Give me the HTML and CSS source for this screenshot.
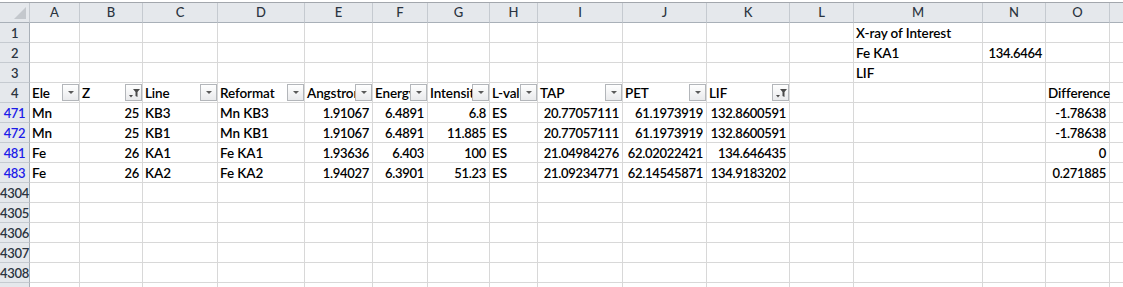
FILE: index.html
```html
<!DOCTYPE html>
<html lang="en">
<head>
    <meta charset="UTF-8">
    <title>Sheet1</title>
    <link rel="stylesheet" href="styles.css">
</head>
<body>
    <div class="sheet">
        <!-- column headers -->
        <div class="corner"></div>
        <div class="ch">A</div><div class="ch">B</div><div class="ch">C</div><div class="ch">D</div>
        <div class="ch">E</div><div class="ch">F</div><div class="ch">G</div><div class="ch">H</div>
        <div class="ch">I</div><div class="ch">J</div><div class="ch">K</div><div class="ch">L</div>
        <div class="ch">M</div><div class="ch">N</div><div class="ch">O</div><div class="ch"></div>

        <!-- row 1 -->
        <div class="rh">1</div>
        <div class="c"></div><div class="c"></div><div class="c"></div><div class="c"></div>
        <div class="c"></div><div class="c"></div><div class="c"></div><div class="c"></div>
        <div class="c"></div><div class="c"></div><div class="c"></div><div class="c"></div>
        <div class="c">X-ray of Interest</div><div class="c"></div><div class="c"></div><div class="c"></div>

        <!-- row 2 -->
        <div class="rh">2</div>
        <div class="c"></div><div class="c"></div><div class="c"></div><div class="c"></div>
        <div class="c"></div><div class="c"></div><div class="c"></div><div class="c"></div>
        <div class="c"></div><div class="c"></div><div class="c"></div><div class="c"></div>
        <div class="c">Fe KA1</div><div class="c num">134.6464</div><div class="c"></div><div class="c"></div>

        <!-- row 3 -->
        <div class="rh">3</div>
        <div class="c"></div><div class="c"></div><div class="c"></div><div class="c"></div>
        <div class="c"></div><div class="c"></div><div class="c"></div><div class="c"></div>
        <div class="c"></div><div class="c"></div><div class="c"></div><div class="c"></div>
        <div class="c">LIF</div><div class="c"></div><div class="c"></div><div class="c"></div>

        <!-- row 4: table header with filters -->
        <div class="rh">4</div>
        <div class="c hd">Ele<span class="fb"></span></div>
        <div class="c hd">Z<span class="fb on"><svg viewBox="0 0 15 16" width="15" height="16"><path d="M7 4h7l-2.5 3v5l-2 -1v-4z" fill="#4a4a4a"/><path d="M3 10h4l-2 2.5z" fill="#4a4a4a"/></svg></span></div>
        <div class="c hd">Line<span class="fb"></span></div>
        <div class="c hd">Reformat<span class="fb"></span></div>
        <div class="c hd">Angstrom<span class="fb"></span></div>
        <div class="c hd">Energy<span class="fb"></span></div>
        <div class="c hd">Intensity<span class="fb"></span></div>
        <div class="c hd">L-value<span class="fb"></span></div>
        <div class="c hd">TAP<span class="fb"></span></div>
        <div class="c hd">PET<span class="fb"></span></div>
        <div class="c hd">LIF<span class="fb on"><svg viewBox="0 0 15 16" width="15" height="16"><path d="M7 4h7l-2.5 3v5l-2 -1v-4z" fill="#4a4a4a"/><path d="M3 10h4l-2 2.5z" fill="#4a4a4a"/></svg></span></div>
        <div class="c"></div><div class="c"></div><div class="c"></div>
        <div class="c spill">Difference</div><div class="c"></div>

        <!-- row 471 -->
        <div class="rh flt">471</div>
        <div class="c">Mn</div><div class="c num">25</div><div class="c">KB3</div><div class="c">Mn KB3</div>
        <div class="c num">1.91067</div><div class="c num">6.4891</div><div class="c num">6.8</div><div class="c">ES</div>
        <div class="c num">20.77057111</div><div class="c num">61.1973919</div><div class="c num">132.8600591</div><div class="c"></div>
        <div class="c"></div><div class="c"></div><div class="c num">-1.78638</div><div class="c"></div>

        <!-- row 472 -->
        <div class="rh flt">472</div>
        <div class="c">Mn</div><div class="c num">25</div><div class="c">KB1</div><div class="c">Mn KB1</div>
        <div class="c num">1.91067</div><div class="c num">6.4891</div><div class="c num">11.885</div><div class="c">ES</div>
        <div class="c num">20.77057111</div><div class="c num">61.1973919</div><div class="c num">132.8600591</div><div class="c"></div>
        <div class="c"></div><div class="c"></div><div class="c num">-1.78638</div><div class="c"></div>

        <!-- row 481 -->
        <div class="rh flt">481</div>
        <div class="c">Fe</div><div class="c num">26</div><div class="c">KA1</div><div class="c">Fe KA1</div>
        <div class="c num">1.93636</div><div class="c num">6.403</div><div class="c num">100</div><div class="c">ES</div>
        <div class="c num">21.04984276</div><div class="c num">62.02022421</div><div class="c num">134.646435</div><div class="c"></div>
        <div class="c"></div><div class="c"></div><div class="c num">0</div><div class="c"></div>

        <!-- row 483 -->
        <div class="rh flt">483</div>
        <div class="c">Fe</div><div class="c num">26</div><div class="c">KA2</div><div class="c">Fe KA2</div>
        <div class="c num">1.94027</div><div class="c num">6.3901</div><div class="c num">51.23</div><div class="c">ES</div>
        <div class="c num">21.09234771</div><div class="c num">62.14545871</div><div class="c num">134.9183202</div><div class="c"></div>
        <div class="c"></div><div class="c"></div><div class="c num">0.271885</div><div class="c"></div>

        <!-- empty rows -->
        <div class="rh">4304</div>
        <div class="c"></div><div class="c"></div><div class="c"></div><div class="c"></div>
        <div class="c"></div><div class="c"></div><div class="c"></div><div class="c"></div>
        <div class="c"></div><div class="c"></div><div class="c"></div><div class="c"></div>
        <div class="c"></div><div class="c"></div><div class="c"></div><div class="c"></div>

        <div class="rh">4305</div>
        <div class="c"></div><div class="c"></div><div class="c"></div><div class="c"></div>
        <div class="c"></div><div class="c"></div><div class="c"></div><div class="c"></div>
        <div class="c"></div><div class="c"></div><div class="c"></div><div class="c"></div>
        <div class="c"></div><div class="c"></div><div class="c"></div><div class="c"></div>

        <div class="rh">4306</div>
        <div class="c"></div><div class="c"></div><div class="c"></div><div class="c"></div>
        <div class="c"></div><div class="c"></div><div class="c"></div><div class="c"></div>
        <div class="c"></div><div class="c"></div><div class="c"></div><div class="c"></div>
        <div class="c"></div><div class="c"></div><div class="c"></div><div class="c"></div>

        <div class="rh">4307</div>
        <div class="c"></div><div class="c"></div><div class="c"></div><div class="c"></div>
        <div class="c"></div><div class="c"></div><div class="c"></div><div class="c"></div>
        <div class="c"></div><div class="c"></div><div class="c"></div><div class="c"></div>
        <div class="c"></div><div class="c"></div><div class="c"></div><div class="c"></div>

        <div class="rh">4308</div>
        <div class="c"></div><div class="c"></div><div class="c"></div><div class="c"></div>
        <div class="c"></div><div class="c"></div><div class="c"></div><div class="c"></div>
        <div class="c"></div><div class="c"></div><div class="c"></div><div class="c"></div>
        <div class="c"></div><div class="c"></div><div class="c"></div><div class="c"></div>

        <div class="rh"></div>
        <div class="c"></div><div class="c"></div><div class="c"></div><div class="c"></div>
        <div class="c"></div><div class="c"></div><div class="c"></div><div class="c"></div>
        <div class="c"></div><div class="c"></div><div class="c"></div><div class="c"></div>
        <div class="c"></div><div class="c"></div><div class="c"></div><div class="c"></div>
    </div>
</body>
</html>
```

FILE: styles.css
```css
body {
    margin: 0;
    background: #fff;
    font-family: Lato, 'Liberation Sans', sans-serif;
    font-size: 13.5px;
    font-weight: 600;
    letter-spacing: -0.1px;
    color: #000;
    overflow: hidden;
}
.sheet {
    margin-top: 2px;
    border-top: 1px solid #a3a7ad;
    display: grid;
    grid-template-columns: 30px 50px 63px 75px 87px 68px 55px 62px 48px 85px 84px 83px 64px 129px 63px 64px 60px;
    grid-auto-rows: 20px;
}
.sheet > div {
    box-sizing: border-box;
    border-right: 1px solid #d8d8d8;
    border-bottom: 1px solid #d8d8d8;
    white-space: nowrap;
}
.corner {
    position: relative;
    background: #e5e8ec;
}
.sheet > .corner,
.sheet > .ch {
    border-right-color: #c5cad0;
    border-bottom-color: #a9b0b8;
}
.corner::after {
    content: '';
    position: absolute;
    right: 3px;
    bottom: 3px;
    border-style: solid;
    border-width: 0 0 12px 12px;
    border-color: transparent transparent #c4c8cd transparent;
}
.ch {
    background: #e5e8ec;
    color: #2b3440;
    text-align: center;
    line-height: 19px;
    font-weight: 500;
    font-size: 13px;
    letter-spacing: 0;
}
.sheet > .rh {
    background: #e5e8ec;
    border-right-color: #a9b0b8;
    border-bottom-color: #c5cad0;
    color: #2b3440;
    display: flex;
    justify-content: center;
    align-items: center;
    overflow: visible;
    font-size: 13px;
    letter-spacing: -0.3px;
}
.rh.flt {
    color: #1c1ce8;
}
.c {
    position: relative;
    padding: 0 3px 0 2px;
    line-height: 20px;
    overflow: hidden;
}
.c.num {
    text-align: right;
    font-size: 13px;
    letter-spacing: -0.3px;
}
.c.spill {
    overflow: visible;
    z-index: 1;
}
.fb {
    position: absolute;
    top: 1px;
    right: 0;
    width: 17px;
    height: 17px;
    box-sizing: border-box;
    border: 1px solid #b3b6ba;
    background: linear-gradient(#ffffff, #e9eaec);
}
.fb::after {
    content: '';
    position: absolute;
    left: 5px;
    top: 6px;
    border-style: solid;
    border-width: 3px 3px 0 3px;
    border-color: #5a5a5a transparent transparent transparent;
}
.fb.on::after {
    display: none;
}
.fb svg {
    display: block;
}
```
